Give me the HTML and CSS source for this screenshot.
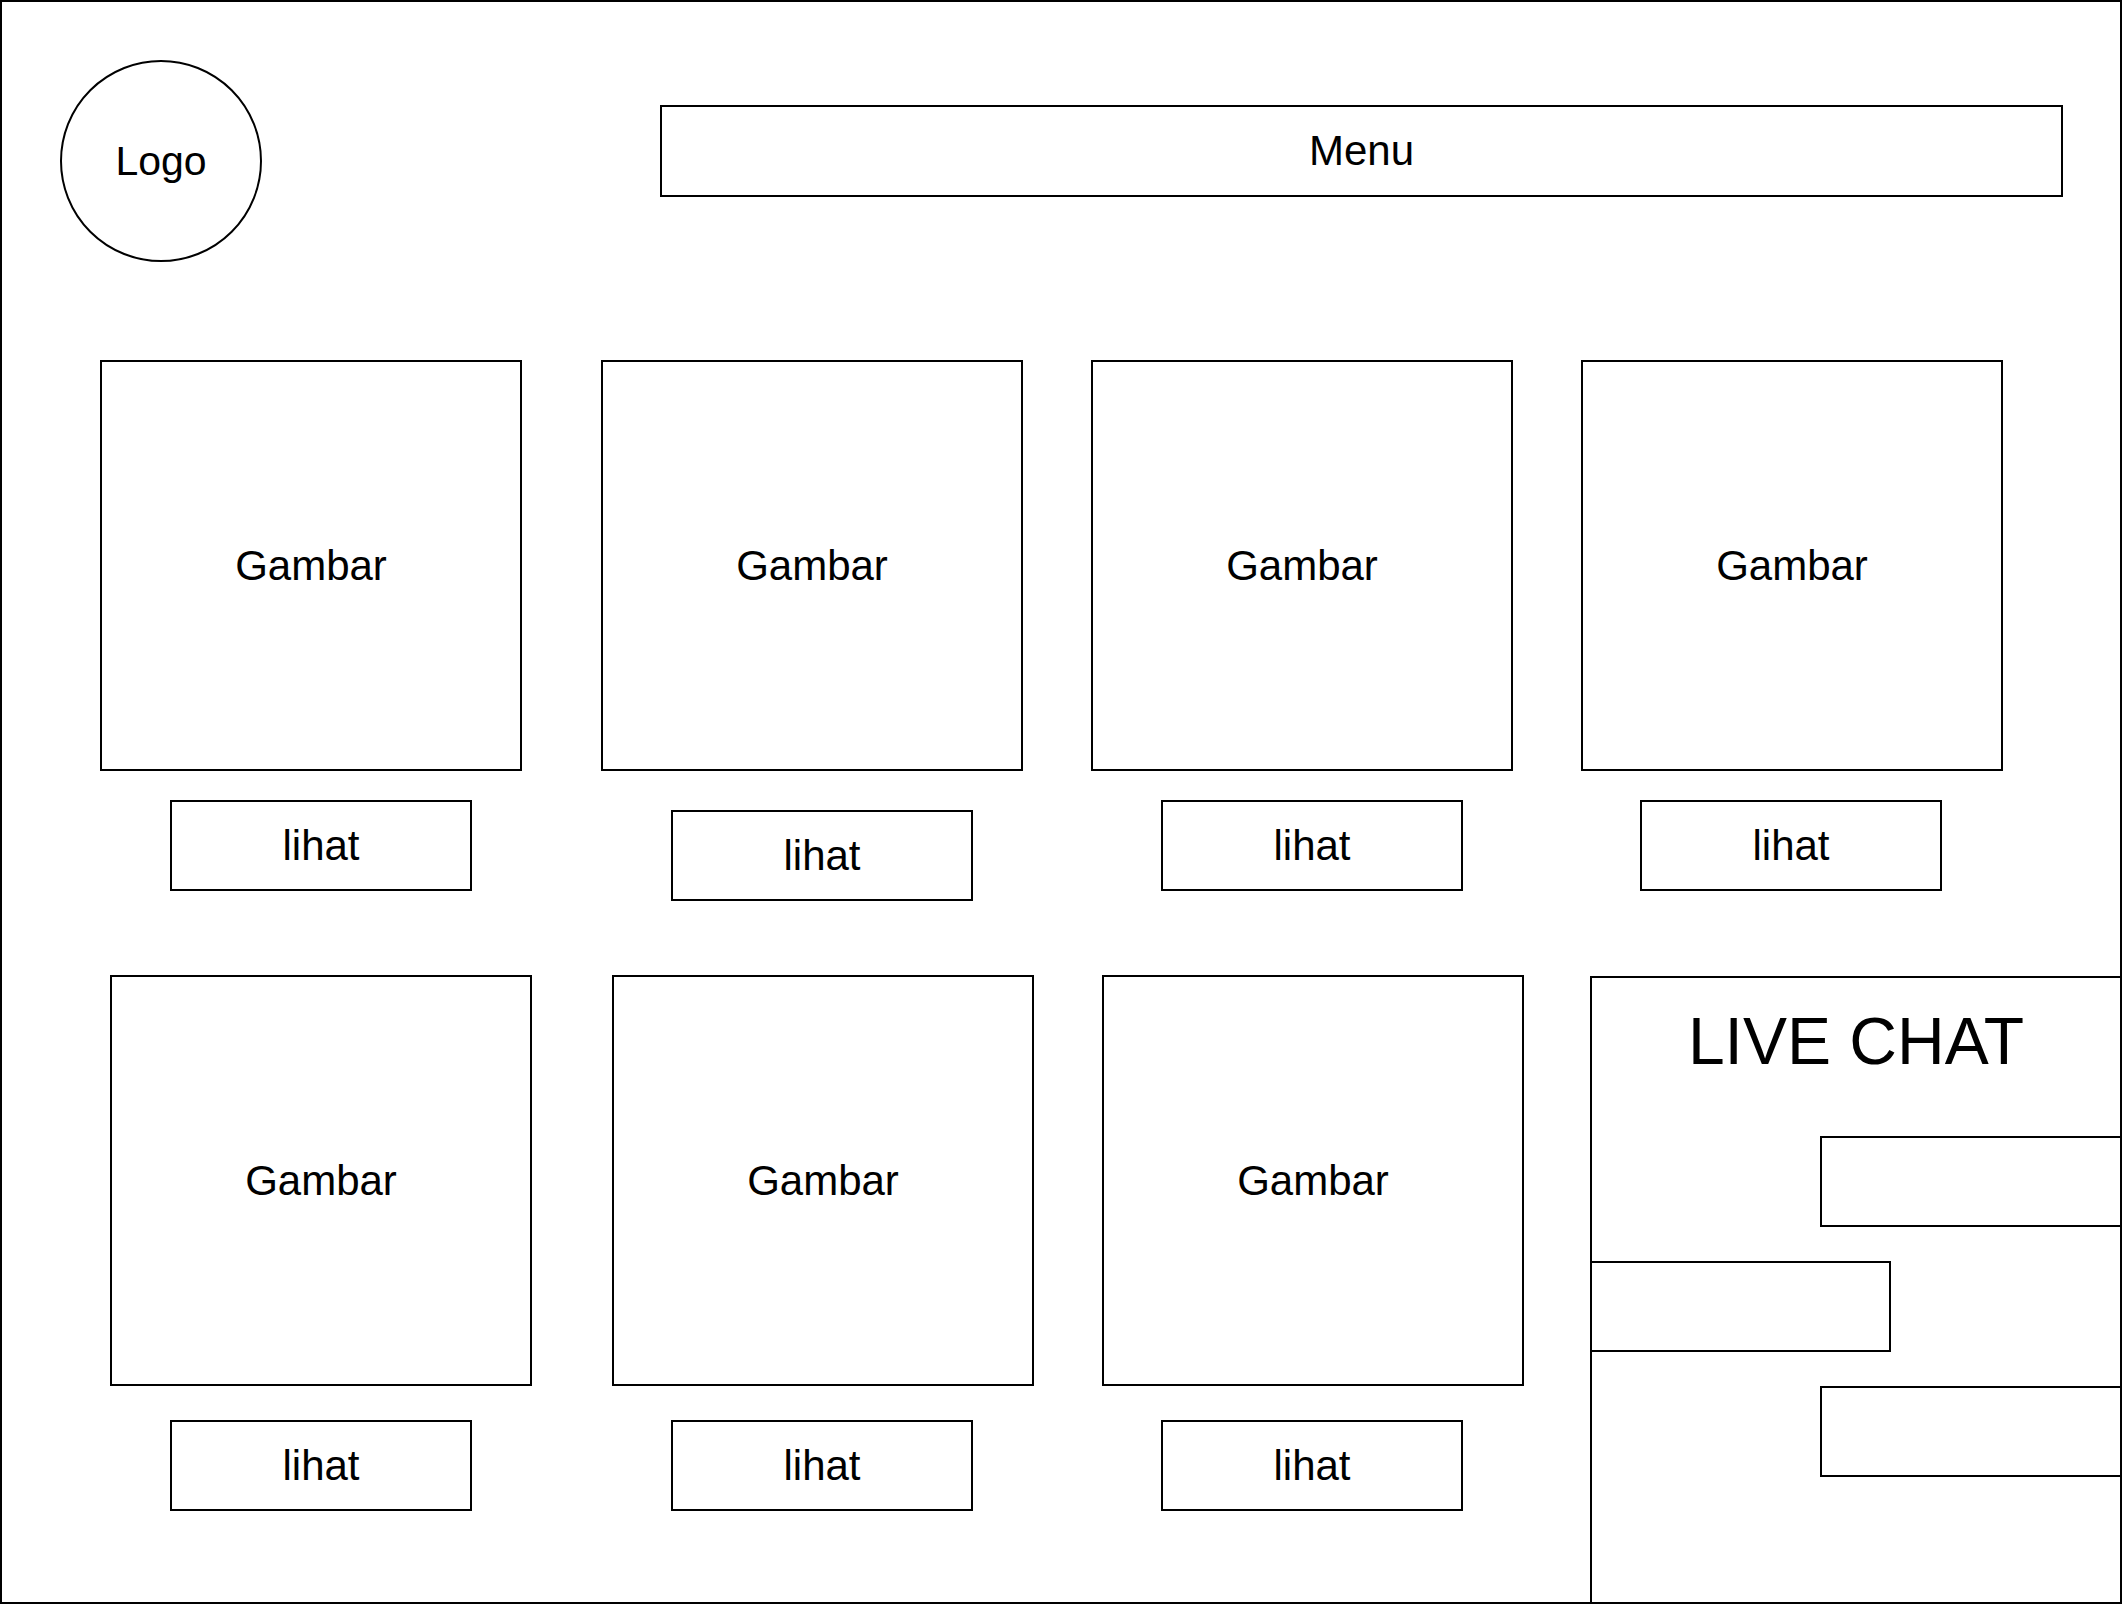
FILE: index.html
```html
<!DOCTYPE html>
<html lang="id">
<head>
<meta charset="utf-8">
<title>Wireframe</title>
<link rel="stylesheet" href="styles.css">
</head>
<body>
<div class="frame">
  <header class="top">
    <div class="logo">Logo</div>
    <nav class="menu">Menu</nav>
  </header>

  <section class="row1">
    <div class="cards">
      <div class="card">Gambar</div>
      <div class="card">Gambar</div>
      <div class="card">Gambar</div>
      <div class="card">Gambar</div>
    </div>
    <div class="buttons">
      <div class="btn">lihat</div>
      <div class="btn shift">lihat</div>
      <div class="btn">lihat</div>
      <div class="btn">lihat</div>
    </div>
  </section>

  <section class="bottom">
    <div class="row2">
      <div class="cards cards2">
        <div class="card">Gambar</div>
        <div class="card">Gambar</div>
        <div class="card">Gambar</div>
      </div>
      <div class="buttons buttons2">
        <div class="btn">lihat</div>
        <div class="btn">lihat</div>
        <div class="btn">lihat</div>
      </div>
    </div>
    <aside class="chat">
      <h2 class="chat-title">LIVE CHAT</h2>
      <div class="bubble out first"></div>
      <div class="bubble in"></div>
      <div class="bubble out last"></div>
    </aside>
  </section>
</div>
</body>
</html>
```

FILE: styles.css
```css
* { box-sizing: border-box; }

html, body {
  margin: 0;
  padding: 0;
  background: #fff;
}

body {
  font-family: "Liberation Sans", Arial, Helvetica, sans-serif;
  color: #000;
}

.frame {
  width: 2122px;
  height: 1604px;
  border: 2px solid #000;
  display: flex;
  flex-direction: column;
}

/* header */
.top {
  display: flex;
  align-items: flex-start;
  padding: 58px 0 0 58px;
}

.logo {
  width: 202px;
  height: 202px;
  border: 2px solid #000;
  border-radius: 50%;
  display: flex;
  align-items: center;
  justify-content: center;
  font-size: 41px;
}

.menu {
  margin-left: 398px;
  margin-top: 45px;
  width: 1403px;
  height: 92px;
  border: 2px solid #000;
  display: flex;
  align-items: center;
  justify-content: center;
  font-size: 42px;
}

/* product rows */
.row1 {
  margin-top: 98px;
}

.cards {
  display: flex;
  margin-left: 98px;
}

.card {
  width: 422px;
  height: 411px;
  border: 2px solid #000;
  display: flex;
  align-items: center;
  justify-content: center;
  font-size: 42px;
}

.cards .card:nth-child(2) { margin-left: 79px; }
.cards .card:nth-child(3) { margin-left: 68px; }
.cards .card:nth-child(4) { margin-left: 68px; }

.buttons {
  display: flex;
  align-items: flex-start;
  margin-top: 29px;
  margin-left: 168px;
}

.btn {
  width: 302px;
  height: 91px;
  border: 2px solid #000;
  display: flex;
  align-items: center;
  justify-content: center;
  font-size: 42px;
}

.buttons .btn:nth-child(2) { margin-left: 199px; }
.buttons .btn:nth-child(3) { margin-left: 188px; }
.buttons .btn:nth-child(4) { margin-left: 177px; }

.btn.shift { margin-top: 10px; }

/* bottom section */
.bottom {
  flex: 1;
  display: flex;
  margin-top: 74px;
}

.row2 {
  width: 1588px;
}

.cards2 {
  margin-left: 108px;
}

.cards2 .card:nth-child(2) { margin-left: 80px; }

.buttons2 {
  margin-top: 34px;
}

/* live chat */
.chat {
  flex: 1;
  margin-top: 1px;
  border-left: 2px solid #000;
  border-top: 2px solid #000;
  display: flex;
  flex-direction: column;
  align-items: flex-start;
}

.chat-title {
  align-self: stretch;
  margin: 30px 0 0 0;
  font-size: 66px;
  font-weight: normal;
  line-height: 66px;
  text-align: center;
}

.bubble {
  height: 91px;
  border-top: 2px solid #000;
  border-bottom: 2px solid #000;
}

.bubble.out {
  align-self: stretch;
  margin-left: 228px;
  border-left: 2px solid #000;
}

.bubble.first { margin-top: 62px; }
.bubble.last { margin-top: 34px; }

.bubble.in {
  width: 299px;
  margin-top: 34px;
  border-right: 2px solid #000;
}
```
